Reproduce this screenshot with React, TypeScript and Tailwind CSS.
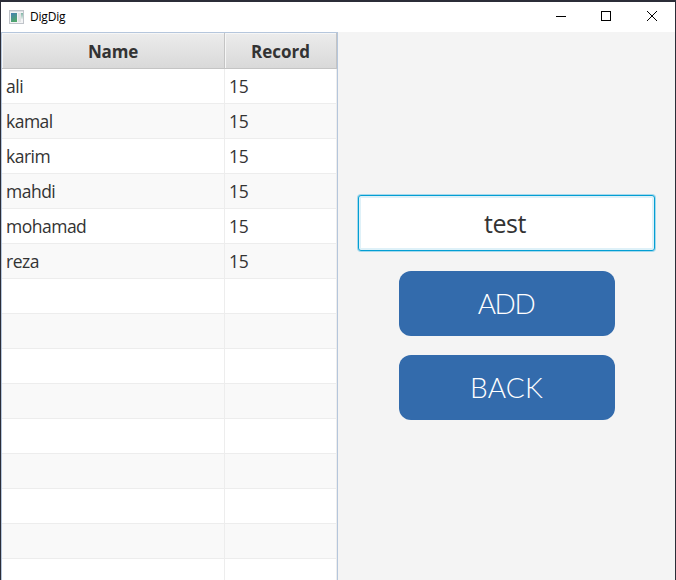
const players = ['ali', 'kamal', 'karim', 'mahdi', 'mohamad', 'reza'].map((name) => ({ name, record: '15' }));
const rows = Array.from({ length: 15 }, (_, i) => players[i] ?? { name: '', record: '' });

function AppIcon() {
  return (
    <svg className="-mt-px" width="15" height="14" viewBox="0 0 15 14" shapeRendering="crispEdges">
      <defs>
        <linearGradient id="screen" x1="0" y1="0" x2="0.4" y2="1">
          <stop offset="0" stopColor="#4580b4" />
          <stop offset="1" stopColor="#50a66c" />
        </linearGradient>
        <linearGradient id="strip" x1="0" y1="0" x2="0" y2="1">
          <stop offset="0" stopColor="#7fb5a6" />
          <stop offset="1" stopColor="#e4eeea" />
        </linearGradient>
      </defs>
      <rect width="15" height="14" fill="#c0c4ca" />
      <rect x="1" y="1" width="13" height="1" fill="#dcdfe3" />
      <rect x="1" y="2" width="13" height="11" fill="#f3f4f5" />
      <rect x="2" y="3" width="6" height="9" fill="url(#screen)" />
      <rect x="9" y="3" width="3" height="9" fill="#e2e3e5" />
      <rect x="12" y="3" width="2" height="6" fill="url(#strip)" />
    </svg>
  );
}

function TitleBar() {
  return (
    <header className="flex h-[30px] shrink-0 items-center bg-white pl-2">
      <AppIcon />
      <span className="ml-[6px] text-[12px] tracking-[-0.2px] leading-4 text-black font-['Open_Sans','Noto_Sans',sans-serif]">DigDig</span>
      <svg className="ml-auto" width="138" height="30" viewBox="0 0 138 30" fill="none" stroke="#000">
        <path d="M19 14.5h10" shapeRendering="crispEdges" />
        <rect x="64.5" y="9.5" width="9" height="9" shapeRendering="crispEdges" />
        <path d="M110 9l10 10M120 9l-10 10" />
      </svg>
    </header>
  );
}

function ScoreTable() {
  return (
    <section className="flex w-[337px] shrink-0 flex-col overflow-hidden border-x border-t border-[#b5c6dc] text-[17.5px] text-[#333]">
      <div className="flex h-9 shrink-0 border-b border-[#c4c4c4] text-[17px] font-bold leading-[37px]">
        <div className="w-[223px] border-r border-[#c4c4c4] bg-linear-to-b from-[#ececec] to-[#d9d9d9] text-center tracking-[-0.2px] shadow-[inset_1px_1px_0_#f6f6f6]">Name</div>
        <div className="w-28 border-r border-[#c4c4c4] bg-linear-to-b from-[#ececec] to-[#d9d9d9] text-center shadow-[inset_1px_1px_0_#f6f6f6]">Record</div>
      </div>
      {rows.map((row, i) => (
        <div key={i} className="flex h-[35px] shrink-0 border-b border-[#ededed] leading-[34px] even:bg-white odd:bg-[#f9f9f9]">
          <div className="w-[223px] border-r border-[#ededed] pl-1 tracking-[-0.5px]">{row.name}</div>
          <div className="w-28 border-r border-[#ededed] pl-1 tracking-[-0.3px]">{row.record}</div>
        </div>
      ))}
    </section>
  );
}

function MenuButton({ label, spacing }: { label: string; spacing: string }) {
  return (
    <button className="h-[65px] w-[216px] rounded-[12px] bg-[#336bac] pb-[2px] text-[28px] font-light text-white font-['Lato',sans-serif]">
      <span className={spacing}>{label}</span>
    </button>
  );
}

export default function App() {
  return (
    <div className="flex h-[580px] w-[676px] flex-col overflow-hidden border-x border-t-2 border-[#2b2d38] bg-[#f4f4f4] font-['Open_Sans','Noto_Sans',sans-serif]">
      <TitleBar />
      <main className="flex min-h-0 flex-1">
        <ScoreTable />
        <section className="flex flex-1 flex-col items-center pt-[163px]">
          <input
            className="h-[56px] w-[297px] rounded-[3px] border border-[#039ed3] bg-white pb-px pr-[3px] text-center text-[25px] tracking-[-0.4px] text-[#333] shadow-[0_0_0_1px_#a5d9ec,inset_0_0_0_2px_#dff1f8] outline-none"
            defaultValue="test"
          />
          <div className="mt-5 flex flex-col gap-[19px]">
            <MenuButton label="ADD" spacing="mr-[1px] tracking-[-1.4px]" />
            <MenuButton label="BACK" spacing="tracking-[0.2px]" />
          </div>
        </section>
      </main>
    </div>
  );
}
